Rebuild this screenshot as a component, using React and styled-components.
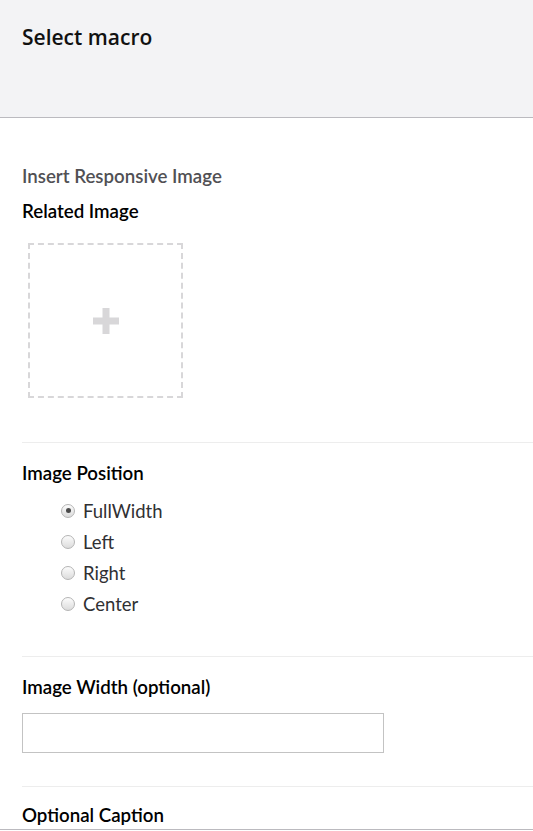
import React from "react";
import styled, { createGlobalStyle } from "styled-components";

const Global = createGlobalStyle`
  html, body { margin: 0; padding: 0; background: #fff; }
  body { font-family: Lato, "Open Sans", sans-serif; color: #000; }
  * { box-sizing: border-box; }
`;

const Page = styled.div`
  height: 831px;
  display: flex;
  flex-direction: column;
  overflow: hidden;
`;

const Header = styled.header`
  height: 118px;
  flex: none;
  background: #f3f3f5;
  border-bottom: 1px solid #bbbabf;
  padding: 24px 22px 0;
`;

const Title = styled.h1`
  margin: 0;
  font-family: "Open Sans", Lato, sans-serif;
  font-size: 21px;
  font-weight: 600;
  line-height: 26px;
  color: #111;
`;

const Content = styled.main`
  flex: 1;
  overflow: hidden;
  padding-left: 22px;
`;

const Section = styled.section`
  padding: ${(p) => p.$top}px 0 ${(p) => p.$bottom}px;
  border-bottom: ${(p) => (p.$last ? "none" : "1px solid #ededed")};
`;

const MacroName = styled.div`
  font-size: 18.7px;
  font-weight: 600;
  line-height: 20px;
  color: #515054;
  margin-bottom: 15px;
`;

const Label = styled.label`
  display: block;
  font-size: 18.7px;
  font-weight: 600;
  line-height: 20px;
  color: #000;
  margin-bottom: ${(p) => p.$gap || 0}px;
`;

const AddBox = styled.button`
  display: flex;
  align-items: center;
  justify-content: center;
  width: 155px;
  height: 155px;
  margin-left: 6px;
  padding: 0;
  background: #fff;
  border: 2px dashed #d8d7d9;
  cursor: pointer;
`;

const RadioList = styled.div`
  display: flex;
  flex-direction: column;
  padding-left: 39px;
`;

const RadioRow = styled.label`
  display: flex;
  align-items: center;
  height: 31px;
  gap: 8px;
  font-size: 18.5px;
  line-height: 20px;
  color: #303033;
`;

const Radio = styled.input`
  appearance: none;
  margin: 0;
  width: 14px;
  height: 14px;
  border-radius: 50%;
  border: 1px solid #b5b5b5;
  background: linear-gradient(#fcfcfc, #dcdcdc);
  position: relative;
  &:checked::after {
    content: "";
    position: absolute;
    left: 3.5px;
    top: 3.5px;
    width: 5px;
    height: 5px;
    border-radius: 50%;
    background: #4a4a4a;
  }
`;

const TextInput = styled.input`
  display: block;
  width: 362px;
  height: 40px;
  border: 1px solid #c3c3c3;
  padding: 0 10px;
  font-family: Lato, sans-serif;
  font-size: 15px;
  outline: none;
`;

const Footer = styled.footer`
  flex: none;
  height: 2px;
  border-top: 1px solid #bbbabf;
`;

const PlusIcon = () => (
  <svg width="26" height="26" viewBox="0 0 26 26">
    <rect x="9.5" y="0" width="7" height="26" fill="#d8d7d9" />
    <rect x="0" y="9.5" width="26" height="7" fill="#d8d7d9" />
  </svg>
);

const positions = ["FullWidth", "Left", "Right", "Center"];

export default function App() {
  return (
    <Page>
      <Global />
      <Header>
        <Title>Select macro</Title>
      </Header>
      <Content>
        <Section $top={48} $bottom={44}>
          <MacroName>Insert Responsive Image</MacroName>
          <Label $gap={22}>Related Image</Label>
          <AddBox aria-label="Add image">
            <PlusIcon />
          </AddBox>
        </Section>
        <Section $top={20} $bottom={37}>
          <Label $gap={12}>Image Position</Label>
          <RadioList>
            {positions.map((p, i) => (
              <RadioRow key={p}>
                <Radio type="radio" name="pos" defaultChecked={i === 0} />
                {p}
              </RadioRow>
            ))}
          </RadioList>
        </Section>
        <Section $top={20} $bottom={33}>
          <Label $gap={16}>Image Width (optional)</Label>
          <TextInput type="text" />
        </Section>
        <Section $top={18} $bottom={0} $last>
          <Label>Optional Caption</Label>
        </Section>
      </Content>
      <Footer />
    </Page>
  );
}
